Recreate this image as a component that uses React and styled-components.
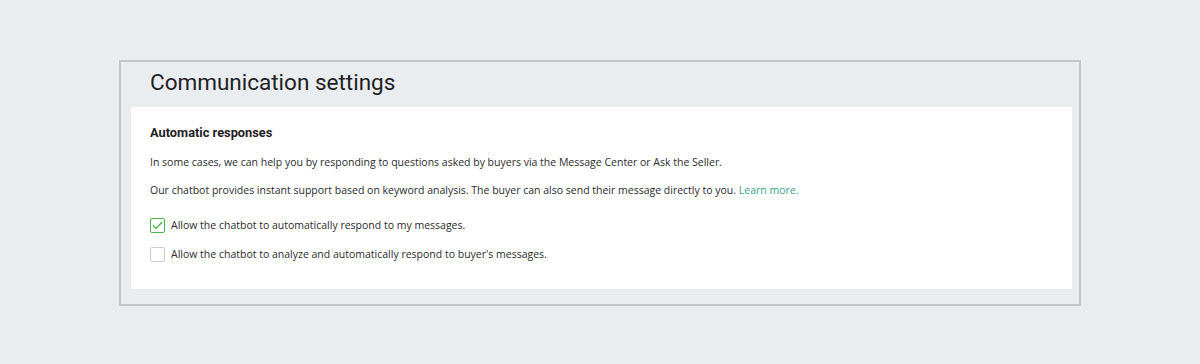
import React, { useState } from 'react';
import styled, { createGlobalStyle } from 'styled-components';

const GlobalStyle = createGlobalStyle`
  html, body {
    margin: 0;
    padding: 0;
    background: #eaedf0;
  }
`;

const Page = styled.div`
  width: 1200px;
  height: 364px;
  padding: 60px 0 0 119px;
  box-sizing: border-box;
`;

const Frame = styled.section`
  width: 962px;
  height: 246px;
  box-sizing: border-box;
  border: 2px solid #c3c6c9;
  padding: 0 7px 15px 10px;
  display: flex;
  flex-direction: column;
`;

const Title = styled.h1`
  margin: 0;
  height: 45px;
  box-sizing: border-box;
  padding: 0 0 5px 19px;
  display: flex;
  align-items: center;
  font-family: Roboto, "Liberation Sans", sans-serif;
  font-weight: 400;
  font-size: 22.5px;
  color: #1f2123;
`;

const Card = styled.div`
  flex: 1;
  background: #fff;
  padding: 17px 19px 0;
  font-family: "Open Sans", "Liberation Sans", sans-serif;
  color: #222;
`;

const SectionTitle = styled.h2`
  margin: 0 0 12px;
  font-family: Roboto, "Liberation Sans", sans-serif;
  font-weight: 700;
  font-size: 12.8px;
  line-height: 18px;
  color: #1f2123;
`;

const Paragraph = styled.p`
  margin: 0 0 ${({ gap }) => gap}px;
  font-size: 10.5px;
  line-height: 16px;
  color: #2a2c2e;
`;

const Link = styled.a`
  color: #3aa58a;
  text-decoration: none;
`;

const OptionList = styled.div`
  display: flex;
  flex-direction: column;
  gap: 14px;
`;

const Option = styled.label`
  display: flex;
  align-items: center;
  gap: 6px;
  font-size: 10.5px;
  line-height: 15px;
  color: #2a2c2e;
  cursor: pointer;
`;

const Box = styled.span`
  width: 15px;
  height: 15px;
  box-sizing: border-box;
  border: 1px solid ${({ checked }) => (checked ? '#4cb54a' : '#c9cccf')};
  border-radius: 2px;
  background: #fff;
  display: flex;
  align-items: center;
  justify-content: center;
  flex-shrink: 0;
`;

const HiddenInput = styled.input`
  display: none;
`;

const options = [
  { id: 'own', label: 'Allow the chatbot to automatically respond to my messages.', checked: true },
  { id: 'buyer', label: "Allow the chatbot to analyze and automatically respond to buyer's messages.", checked: false },
];

function Checkbox({ label, defaultChecked }) {
  const [checked, setChecked] = useState(defaultChecked);
  return (
    <Option>
      <HiddenInput type="checkbox" checked={checked} onChange={() => setChecked(!checked)} />
      <Box checked={checked}>
        {checked && (
          <svg width="11" height="9" viewBox="0 0 11 9">
            <path d="M1 4.5 L4 7.5 L10 1" fill="none" stroke="#4cb54a" strokeWidth="1.3" />
          </svg>
        )}
      </Box>
      {label}
    </Option>
  );
}

export default function App() {
  return (
    <>
      <GlobalStyle />
      <Page>
        <Frame>
          <Title>Communication settings</Title>
          <Card>
            <SectionTitle>Automatic responses</SectionTitle>
            <Paragraph gap={12}>
              In some cases, we can help you by responding to questions asked by buyers via the Message Center or Ask the Seller.
            </Paragraph>
            <Paragraph gap={20}>
              Our chatbot provides instant support based on keyword analysis. The buyer can also send their message directly to you.{' '}
              <Link href="#">Learn more.</Link>
            </Paragraph>
            <OptionList>
              {options.map(o => (
                <Checkbox key={o.id} label={o.label} defaultChecked={o.checked} />
              ))}
            </OptionList>
          </Card>
        </Frame>
      </Page>
    </>
  );
}
